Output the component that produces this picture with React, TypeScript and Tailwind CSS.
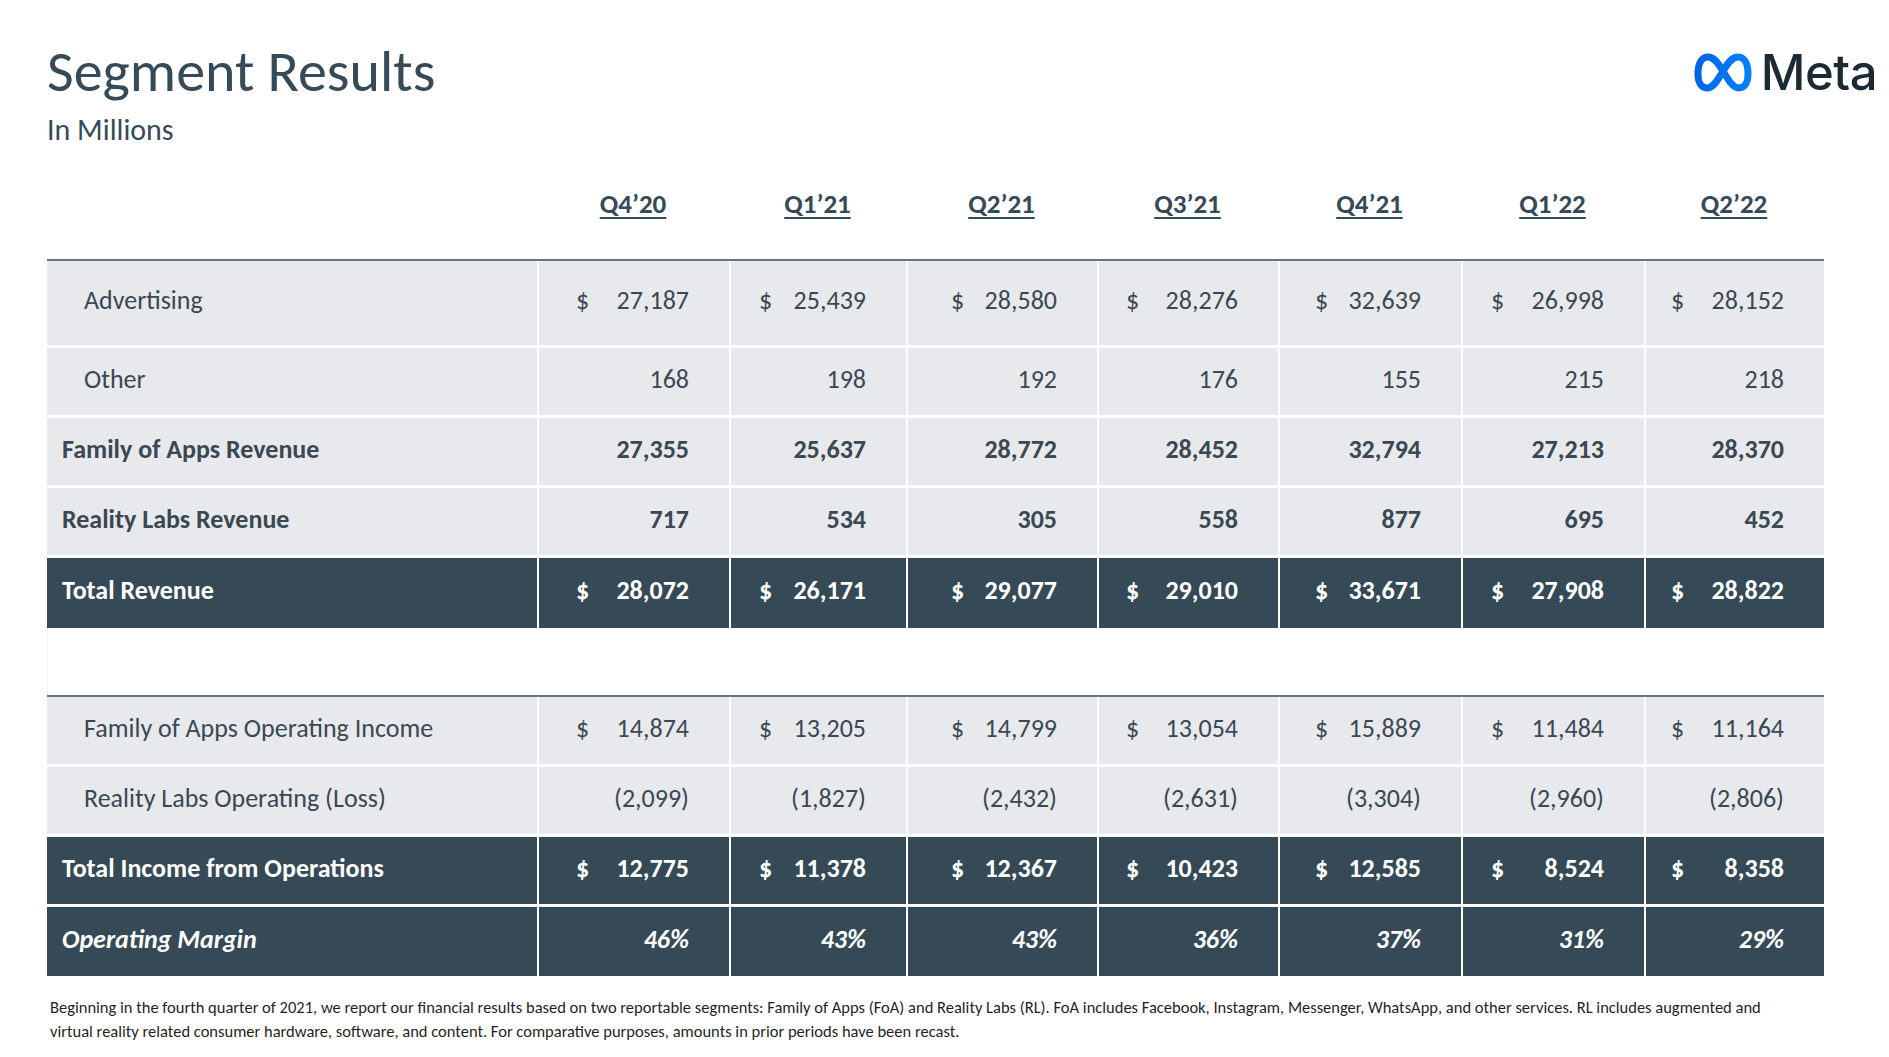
import React from "react";

const quarters = ["Q4’20", "Q1’21", "Q2’21", "Q3’21", "Q4’21", "Q1’22", "Q2’22"];

// left inset of the "$" per quarter column
const dollarPad = ["pl-[37px]", "pl-[28px]", "pl-[43px]", "pl-[27px]", "pl-[35px]", "pl-[28px]", "pl-[25px]"];

const grid = "grid grid-cols-[490px_192px_177px_191px_181px_183px_183px_180px]";

type Row = {
  label: string;
  values: string[];
  dollar?: boolean;
  bold?: boolean;
  dark?: boolean;
  italic?: boolean;
  indent?: boolean;
  height: string;
  last?: boolean;
};

const revenueRows: Row[] = [
  {
    label: "Advertising",
    values: ["27,187", "25,439", "28,580", "28,276", "32,639", "26,998", "28,152"],
    dollar: true,
    indent: true,
    height: "h-[87px]",
  },
  { label: "Other", values: ["168", "198", "192", "176", "155", "215", "218"], indent: true, height: "h-[70px]" },
  {
    label: "Family of Apps Revenue",
    values: ["27,355", "25,637", "28,772", "28,452", "32,794", "27,213", "28,370"],
    bold: true,
    height: "h-[70px]",
  },
  {
    label: "Reality Labs Revenue",
    values: ["717", "534", "305", "558", "877", "695", "452"],
    bold: true,
    height: "h-[70px]",
  },
  {
    label: "Total Revenue",
    values: ["28,072", "26,171", "29,077", "29,010", "33,671", "27,908", "28,822"],
    dollar: true,
    bold: true,
    dark: true,
    height: "h-[70px]",
    last: true,
  },
];

const incomeRows: Row[] = [
  {
    label: "Family of Apps Operating Income",
    values: ["14,874", "13,205", "14,799", "13,054", "15,889", "11,484", "11,164"],
    dollar: true,
    indent: true,
    height: "h-[70px]",
  },
  {
    label: "Reality Labs Operating (Loss)",
    values: ["(2,099)", "(1,827)", "(2,432)", "(2,631)", "(3,304)", "(2,960)", "(2,806)"],
    indent: true,
    height: "h-[70px]",
  },
  {
    label: "Total Income from Operations",
    values: ["12,775", "11,378", "12,367", "10,423", "12,585", "8,524", "8,358"],
    dollar: true,
    bold: true,
    dark: true,
    height: "h-[70px]",
  },
  {
    label: "Operating Margin",
    values: ["46%", "43%", "43%", "36%", "37%", "31%", "29%"],
    bold: true,
    italic: true,
    dark: true,
    height: "h-[69px]",
    last: true,
  },
];

function MetaLogo() {
  return (
    <div className="flex items-center gap-[9px]">
      <svg width="58" height="42" viewBox="0 0 58 42" fill="none">
        <defs>
          <linearGradient id="metaGrad" x1="0" y1="0" x2="58" y2="0" gradientUnits="userSpaceOnUse">
            <stop offset="0" stopColor="#0064e0" />
            <stop offset="1" stopColor="#0082fb" />
          </linearGradient>
        </defs>
        <path
          d="M29 19 C35 29 39 36 45 36 C51 36 54 30 54 22 C54 11 50 5 44 5 C38 5 34 11 29 19 C24 28 19 36 13 36 C7 36 4 30 4 22 C4 11 8 5 14 5 C20 5 24 11 29 19 Z"
          stroke="url(#metaGrad)"
          strokeWidth="7"
          strokeLinejoin="round"
        />
      </svg>
      <span className="font-['Inter',sans-serif] font-medium text-[49px] leading-none text-[#1c2b33] tracking-[-0.5px]">
        Meta
      </span>
    </div>
  );
}

function TableRow({ row }: { row: Row }) {
  const bg = row.dark ? "bg-[#354a56] text-white" : "bg-[#e8e9ec] text-[#3a4853]";
  const weight = row.bold ? "font-bold" : "font-normal";
  const style = row.italic ? "italic" : "";
  const gap = row.last ? "" : "border-b-[3px] border-white";
  return (
    <div className={`${grid} ${row.height} ${gap} ${weight} ${style} text-[26px]`}>
      <div className={`${bg} flex items-center pb-[5px] ${row.indent ? "pl-[37px]" : "pl-[15px]"}`}>
        {row.label}
      </div>
      {row.values.map((v, i) => (
        <div
          key={i}
          className={`${bg} border-l-2 border-white flex items-center pb-[5px] ${
            row.dollar ? "justify-between" : "justify-end"
          } ${dollarPad[i]} pr-10`}
        >
          {row.dollar && <span>$</span>}
          <span>{v}</span>
        </div>
      ))}
    </div>
  );
}

export default function App() {
  return (
    <div className="w-[1889px] h-[1057px] bg-white overflow-hidden font-['Carlito','Lato',sans-serif] text-[#354957]">
      <div className="flex justify-between items-start pl-[47px] pr-[12px] pt-[40px]">
        <div>
          <h1 className="text-[58px] leading-[64px] font-normal text-[#364a58]">Segment Results</h1>
          <div className="text-[30px] leading-[40px] mt-[6px] text-[#364a58]">In Millions</div>
        </div>
        <div className="pt-[8px]">
          <MetaLogo />
        </div>
      </div>

      <div className="pl-[47px] mt-[22px]">
        <div className={`${grid} h-[87px] pb-[22px] items-center`}>
          <div />
          {quarters.map((q) => (
            <div
              key={q}
              className="text-center text-[27px] font-bold text-[#354957] underline decoration-2 underline-offset-[4px]"
            >
              {q}
            </div>
          ))}
        </div>
        <div className="w-[1777px] h-[2px] bg-[#6b7379]" />
        {revenueRows.map((r) => (
          <TableRow key={r.label} row={r} />
        ))}
        <div className="w-[1777px] h-[67px] border-l border-[#eef0f2]" />
        <div className="w-[1777px] h-[2px] bg-[#6b7379]" />
        {incomeRows.map((r) => (
          <TableRow key={r.label} row={r} />
        ))}
      </div>

      <div className="pl-[50px] pt-[19px] text-[16.5px] leading-[24px] text-[#1f1f1f] whitespace-nowrap">
        Beginning in the fourth quarter of 2021, we report our financial results based on two reportable segments:
        Family of Apps (FoA) and Reality Labs (RL). FoA includes Facebook, Instagram, Messenger, WhatsApp, and other
        services. RL includes augmented and
        <br />
        virtual reality related consumer hardware, software, and content. For comparative purposes, amounts in prior
        periods have been recast.
      </div>
    </div>
  );
}
